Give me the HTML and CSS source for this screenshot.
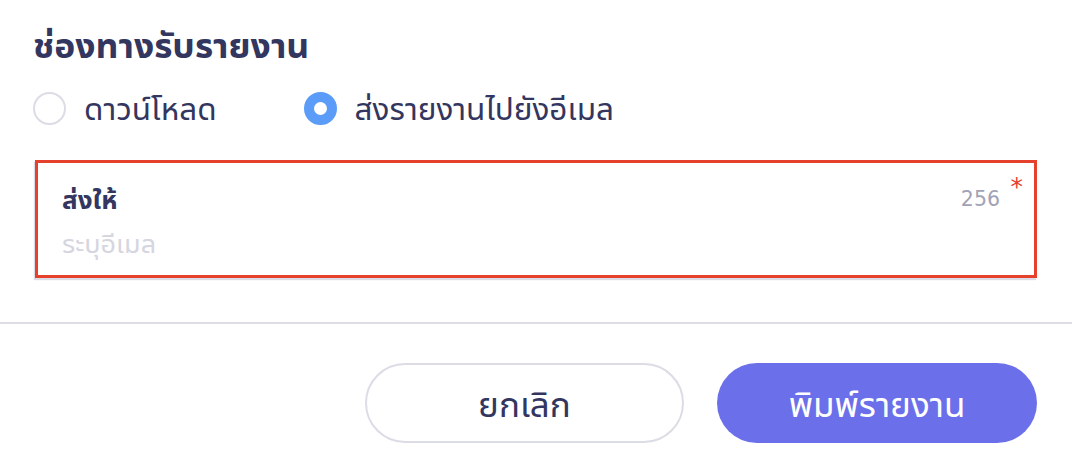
FILE: index.html
```html
<!DOCTYPE html>
<html lang="th">
<head>
<meta charset="utf-8">
<title>ช่องทางรับรายงาน</title>
<link rel="stylesheet" href="styles.css">
</head>
<body>
<div class="dialog">
  <div class="content">
    <h2 class="title">ช่องทางรับรายงาน</h2>
    <div class="radios">
      <label class="radio">
        <span class="dot"></span>
        <span class="radio-label">ดาวน์โหลด</span>
      </label>
      <label class="radio checked">
        <span class="dot"></span>
        <span class="radio-label">ส่งรายงานไปยังอีเมล</span>
      </label>
    </div>
    <div class="field">
      <div class="field-head">
        <span class="field-label">ส่งให้</span>
        <span class="counter">256</span>
      </div>
      <div class="placeholder">ระบุอีเมล</div>
      <span class="required">*</span>
    </div>
  </div>
  <div class="divider"></div>
  <div class="actions">
    <button class="btn btn-cancel">ยกเลิก</button>
    <button class="btn btn-primary">พิมพ์รายงาน</button>
  </div>
</div>
</body>
</html>
```

FILE: styles.css
```css
html, body {
  margin: 0;
  padding: 0;
  background: #ffffff;
}
body {
  font-family: "Noto Sans Thai UI", "Noto Sans Thai", "Sarabun", "Prompt", "Noto Sans", "DejaVu Sans", sans-serif;
  color: #33365e;
}
.dialog {
  width: 1072px;
  height: 474px;
  display: flex;
  flex-direction: column;
}
.content {
  padding: 22px 35px 0 33px;
}
.title {
  margin: 0;
  font-size: 35.5px;
  font-weight: 700;
  line-height: 44px;
  color: #33365e;
}
.radios {
  display: flex;
  margin-top: 25px;
  height: 34px;
  align-items: center;
}
.radio {
  display: flex;
  align-items: center;
  gap: 18px;
}
.radio + .radio {
  margin-left: 87px;
}
.dot {
  width: 33px;
  height: 33px;
  box-sizing: border-box;
  border-radius: 50%;
  border: 2px solid #dcdce6;
  background: #fff;
}
.radio.checked .dot {
  border: 10.5px solid #5a9cf8;
}
.radio-label {
  font-size: 31.5px;
  line-height: 34px;
  color: #33365e;
}
.field {
  position: relative;
  margin: 35px 0 0 2px;
  height: 118px;
  box-sizing: border-box;
  border: 3px solid #e5412c;
  box-shadow: -1px 2px 1px #dcdce6;
  padding: 17px 34px 0 24px;
}
.field-head {
  display: flex;
  justify-content: space-between;
  align-items: center;
  height: 38px;
}
.field-label {
  font-size: 26px;
  font-weight: 700;
  color: #33365e;
}
.counter {
  font-family: "DejaVu Sans", sans-serif;
  font-size: 20.5px;
  color: #a2a2b6;
}
.placeholder {
  margin-top: 7px;
  font-size: 27px;
  color: #d6d6e0;
  line-height: 36px;
}
.required {
  position: absolute;
  top: 11px;
  right: 11px;
  font-family: "DejaVu Sans", sans-serif;
  font-size: 25px;
  line-height: 25px;
  color: #e5412c;
}
.divider {
  margin-top: 44px;
  height: 2px;
  background: #dddde6;
}
.actions {
  display: flex;
  justify-content: flex-end;
  gap: 33px;
  padding: 39px 35px 0 0;
}
.btn {
  height: 80px;
  border-radius: 40px;
  font-family: inherit;
  font-size: 35px;
  cursor: pointer;
}
.btn-cancel {
  width: 319px;
  background: #ffffff;
  border: 2px solid #dcdce6;
  color: #33365e;
}
.btn-primary {
  width: 320px;
  background: #6c6fea;
  border: none;
  color: #ffffff;
}
```
